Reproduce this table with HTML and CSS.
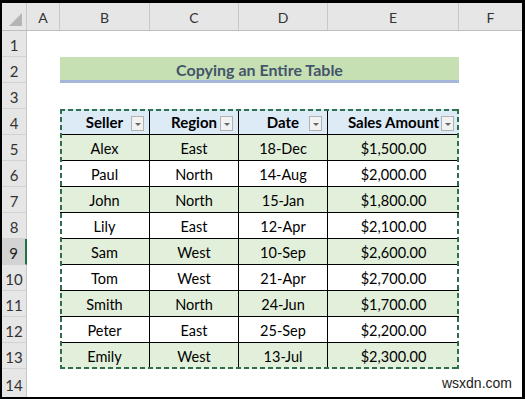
FILE: index.html
```html
<!DOCTYPE html>
<html>
<head>
<meta charset="utf-8">
<link rel="stylesheet" href="styles.css">
</head>
<body>
<div class="frame">
  <div class="sheet">
    <div class="colhdr">
      <div class="corner"><span class="tri"></span></div>
      <div class="ch w-a">A</div>
      <div class="ch w-b">B</div>
      <div class="ch w-c">C</div>
      <div class="ch w-d">D</div>
      <div class="ch w-e">E</div>
      <div class="ch w-f">F</div>
    </div>
    <div class="body">
      <div class="rowhdrs">
        <div class="rh">1</div>
        <div class="rh">2</div>
        <div class="rh">3</div>
        <div class="rh">4</div>
        <div class="rh">5</div>
        <div class="rh">6</div>
        <div class="rh">7</div>
        <div class="rh">8</div>
        <div class="rh active">9</div>
        <div class="rh">10</div>
        <div class="rh">11</div>
        <div class="rh">12</div>
        <div class="rh">13</div>
        <div class="rh last">14</div>
      </div>
      <div class="cells">
        <div class="blank"></div>
        <div class="title">Copying an Entire Table</div>
        <div class="blank"></div>
        <div class="table">
          <div class="tr head">
            <div class="td w-b">Seller<span class="dd"></span></div>
            <div class="td w-c">Region<span class="dd"></span></div>
            <div class="td w-d">Date<span class="dd"></span></div>
            <div class="td w-e">Sales Amount<span class="dd"></span></div>
          </div>
          <div class="tr g"><div class="td w-b">Alex</div><div class="td w-c">East</div><div class="td w-d">18-Dec</div><div class="td w-e">$1,500.00</div></div>
          <div class="tr"><div class="td w-b">Paul</div><div class="td w-c">North</div><div class="td w-d">14-Aug</div><div class="td w-e">$2,000.00</div></div>
          <div class="tr g"><div class="td w-b">John</div><div class="td w-c">North</div><div class="td w-d">15-Jan</div><div class="td w-e">$1,800.00</div></div>
          <div class="tr"><div class="td w-b">Lily</div><div class="td w-c">East</div><div class="td w-d">12-Apr</div><div class="td w-e">$2,100.00</div></div>
          <div class="tr g"><div class="td w-b">Sam</div><div class="td w-c">West</div><div class="td w-d">10-Sep</div><div class="td w-e">$2,600.00</div></div>
          <div class="tr"><div class="td w-b">Tom</div><div class="td w-c">West</div><div class="td w-d">21-Apr</div><div class="td w-e">$2,700.00</div></div>
          <div class="tr g"><div class="td w-b">Smith</div><div class="td w-c">North</div><div class="td w-d">24-Jun</div><div class="td w-e">$1,700.00</div></div>
          <div class="tr"><div class="td w-b">Peter</div><div class="td w-c">East</div><div class="td w-d">25-Sep</div><div class="td w-e">$2,200.00</div></div>
          <div class="tr g last"><div class="td w-b">Emily</div><div class="td w-c">West</div><div class="td w-d">13-Jul</div><div class="td w-e">$2,300.00</div></div>
        </div>
      </div>
    </div>
    <div class="wm">wsxdn.com</div>
  </div>
</div>
</body>
</html>
```

FILE: styles.css
```css
* { box-sizing: border-box; }
html, body { margin: 0; padding: 0; background: #000; }
body { font-family: Lato, "Open Sans", sans-serif; }

.frame {
  width: 525px;
  height: 399px;
  background: #000;
  padding: 3px 3px 2px 2px;
  overflow: hidden;
}
.sheet {
  position: relative;
  width: 520px;
  height: 394px;
  background: #fff;
  overflow: hidden;
}

.colhdr {
  display: flex;
  height: 28px;
  background: #e6e6e6;
  border-bottom: 1px solid #bdbdbd;
}
.corner {
  width: 25px;
  flex: none;
  position: relative;
  border-right: 1px solid #c8c8c8;
}
.tri {
  position: absolute;
  right: 4px;
  bottom: 4px;
  width: 0;
  height: 0;
  border-left: 13px solid transparent;
  border-bottom: 13px solid #b4b4b4;
}
.ch {
  flex: none;
  display: flex;
  align-items: center;
  justify-content: center;
  font-size: 14px;
  color: #333;
  border-right: 1px solid #c8c8c8;
  padding-top: 1px;
}
.w-a { width: 33px; }
.w-b { width: 90px; }
.w-c { width: 89px; }
.w-d { width: 89px; }
.w-e { width: 131px; }
.w-f { width: 63px; }
.ch.w-f { border-right: none; }

.body {
  display: flex;
}
.rowhdrs {
  width: 25px;
  flex: none;
  display: flex;
  flex-direction: column;
}
.rh {
  height: 26px;
  background: #e6e6e6;
  border-right: 1px solid #c8c8c8;
  border-bottom: 1px solid #d2d2d2;
  display: flex;
  align-items: center;
  justify-content: center;
  font-size: 15px;
  color: #333;
  padding-top: 2px;
}
.rh.active {
  background: #d3d3d3;
  border-right: 2px solid #217346;
  color: #222;
}
.rh.last { height: 30px; border-bottom: none; }

.cells {
  flex: 1;
  display: flex;
  flex-direction: column;
  padding-left: 33px;
}
.blank { height: 26px; }
.title {
  width: 399px;
  height: 26px;
  background: #c6e0b4;
  border-bottom: 3px solid #a4b6d9;
  display: flex;
  align-items: center;
  justify-content: center;
  font-weight: 700;
  font-size: 16px;
  color: #44546a;
  padding-top: 1px;
}

.table {
  position: relative;
  width: 399px;
  display: flex;
  flex-direction: column;
}
.table::after {
  content: "";
  position: absolute;
  inset: 0;
  background:
    repeating-linear-gradient(90deg, #2f6f4d 0 5px, transparent 5px 8px) left top / 100% 2px no-repeat,
    repeating-linear-gradient(90deg, #2f6f4d 0 5px, transparent 5px 8px) left bottom / 100% 2px no-repeat,
    repeating-linear-gradient(180deg, #2f6f4d 0 5px, transparent 5px 8px) left top / 2px 100% no-repeat,
    repeating-linear-gradient(180deg, #2f6f4d 0 5px, transparent 5px 8px) right top / 2px 100% no-repeat;
  pointer-events: none;
}
.tr {
  display: flex;
  height: 26px;
  border-bottom: 1px solid #000;
  background: #fff;
}
.tr.g { background: #e2efda; }
.tr.head { background: #ddebf7; font-weight: 700; }
.tr.head .td { font-size: 15px; color: #000; }
.tr.last { border-bottom: none; }
.td {
  position: relative;
  flex: none;
  display: flex;
  align-items: center;
  justify-content: center;
  font-size: 14.5px;
  color: #000;
  border-right: 1px solid #000;
  padding-top: 1px;
}
.td.w-e { border-right: none; }
.dd {
  position: absolute;
  right: 5px;
  top: 7px;
  width: 13px;
  height: 15px;
  background: #f2f2f2;
  border: 1px solid #b2b2b2;
}
.dd::after {
  content: "";
  position: absolute;
  left: 3px;
  top: 6px;
  border-left: 3px solid transparent;
  border-right: 3px solid transparent;
  border-top: 3px solid #666;
}

.wm {
  position: absolute;
  right: 8px;
  bottom: 6px;
  font-family: "Liberation Sans", Arial, sans-serif;
  font-size: 14px;
  color: #222;
  background: #fff;
  padding: 0 2px;
}
```
